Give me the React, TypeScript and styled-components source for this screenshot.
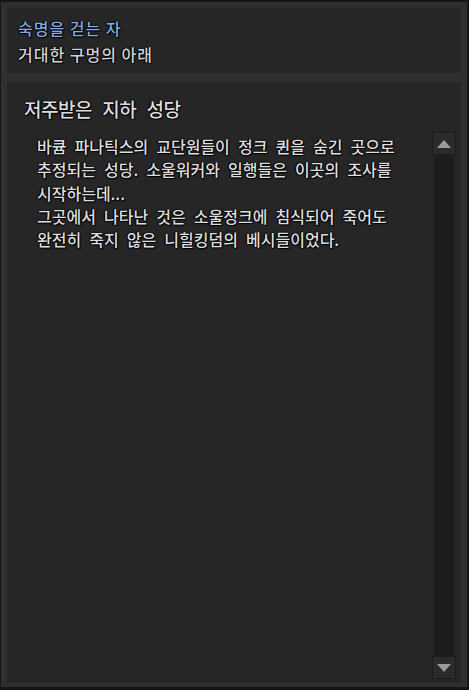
import React from 'react'
import styled, { createGlobalStyle } from 'styled-components'

const GlobalStyle = createGlobalStyle`
  html, body {
    margin: 0;
    padding: 0;
    background: #141414;
  }
  body {
    font-family: "Noto Sans CJK KR", "Noto Sans", sans-serif;
  }
`

const outline = '0 0 2px #000, 1px 1px 1px #000, -1px 0 1px #000'

const Frame = styled.div`
  box-sizing: border-box;
  width: 469px;
  height: 690px;
  background: #2f2f2f;
  border-style: solid;
  border-color: #161616;
  border-width: 2px 2px 3px 1px;
  padding: 6px 6px 5px 6px;
  display: flex;
  flex-direction: column;
  gap: 9px;
`

const Panel = styled.section`
  background: #262626;
  display: flex;
  flex-direction: column;
`

const QuestHeader = styled(Panel)`
  height: 65px;
  box-sizing: border-box;
  padding: 7px 11px 0 11px;
`

const HeaderLine = styled.div<{ $accent?: boolean }>`
  font-size: 16px;
  font-weight: 500;
  line-height: 26px;
  letter-spacing: 1px;
  color: ${(p) => (p.$accent ? '#84abe6' : '#d2d2d2')};
  text-shadow: ${outline};
  white-space: nowrap;
`

const Detail = styled(Panel)`
  flex: 1;
  min-height: 0;
  padding: 14px 5px 3px 17px;
`

const Heading = styled.h2`
  margin: 0 0 10px;
  font-size: 19px;
  font-weight: 500;
  line-height: 26px;
  letter-spacing: -0.5px;
  word-spacing: 6.5px;
  color: #dcdcdc;
  text-shadow: ${outline};
`

const ContentRow = styled.div`
  flex: 1;
  min-height: 0;
  display: flex;
`

const Description = styled.p`
  flex: 1;
  margin: 0;
  padding: 3px 0 0 13px;
  font-size: 16px;
  font-weight: 500;
  line-height: 23.3px;
  letter-spacing: 0;
  word-spacing: 4.5px;
  color: #dedede;
  text-shadow: ${outline};
  white-space: nowrap;
`

const ScrollBar = styled.div`
  width: 24px;
  display: flex;
  flex-direction: column;
  align-items: center;
`

const ScrollButton = styled.div`
  box-sizing: border-box;
  width: 24px;
  height: 23px;
  background: #2b2b2b;
  border: 1px solid #1b1b1b;
  display: flex;
  align-items: center;
  justify-content: center;
`

const Track = styled.div`
  flex: 1;
  width: 20px;
  background: #1d1d1d;
`

const Arrow = ({ down }: { down?: boolean }) => (
  <svg width="16" height="12" viewBox="0 0 16 12">
    <polygon
      points={down ? '1,2 15,2 8,10' : '1,10 15,10 8,2'}
      fill="#9a9aa0"
    />
  </svg>
)

const App: React.FC = () => {
  return (
    <>
      <GlobalStyle />
      <Frame>
        <QuestHeader>
          <HeaderLine $accent>숙명을 걷는 자</HeaderLine>
          <HeaderLine>거대한 구멍의 아래</HeaderLine>
        </QuestHeader>
        <Detail>
          <Heading>저주받은 지하 성당</Heading>
          <ContentRow>
            <Description>
              바큠 파나틱스의 교단원들이 정크 퀸을 숨긴 곳으로
              <br />
              추정되는 성당. 소울워커와 일행들은 이곳의 조사를
              <br />
              시작하는데...
              <br />
              그곳에서 나타난 것은 소울정크에 침식되어 죽어도
              <br />
              완전히 죽지 않은 니힐킹덤의 베시들이었다.
            </Description>
            <ScrollBar>
              <ScrollButton>
                <Arrow />
              </ScrollButton>
              <Track />
              <ScrollButton>
                <Arrow down />
              </ScrollButton>
            </ScrollBar>
          </ContentRow>
        </Detail>
      </Frame>
    </>
  )
}

export default App
